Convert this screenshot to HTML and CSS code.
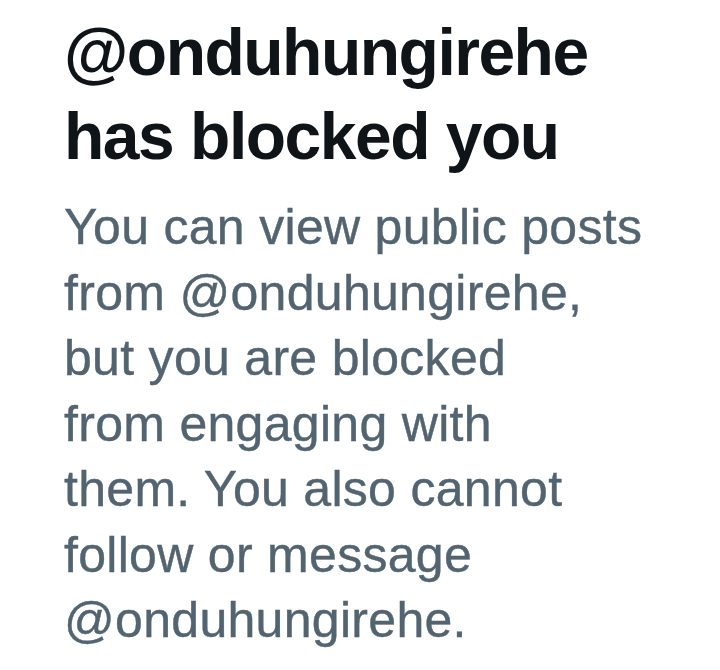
FILE: index.html
```html
<!DOCTYPE html>
<html lang="en">
<head>
  <meta charset="UTF-8">
  <title>Blocked</title>
  <link rel="stylesheet" href="styles.css">
</head>
<body>

  <div class="blocked">
    <h1 class="blocked-title">@onduhungirehe<br>has blocked you</h1>
    <p class="blocked-text">
      You can view public posts<br>
      from @onduhungirehe,<br>
      but you are blocked<br>
      from engaging with<br>
      them. You also cannot<br>
      follow or message<br>
      @onduhungirehe.
    </p>
  </div>

</body>
</html>
```

FILE: styles.css
```css
body {
  margin: 0;
  padding: 0;
  background: #ffffff;
  font-family: "Liberation Sans", Arial, sans-serif;
}

.blocked {
  padding: 10px 20px 0 64px;
}

.blocked-title {
  margin: 0;
  font-size: 66px;
  line-height: 84px;
  font-weight: 700;
  letter-spacing: -1.5px;
  color: #0f1419;
  white-space: nowrap;
}

.blocked-text {
  margin: 17px 0 0;
  font-size: 50px;
  line-height: 65.5px;
  letter-spacing: 0.3px;
  color: #536471;
  -webkit-text-stroke: 0.4px #536471;
  white-space: nowrap;
}
```
